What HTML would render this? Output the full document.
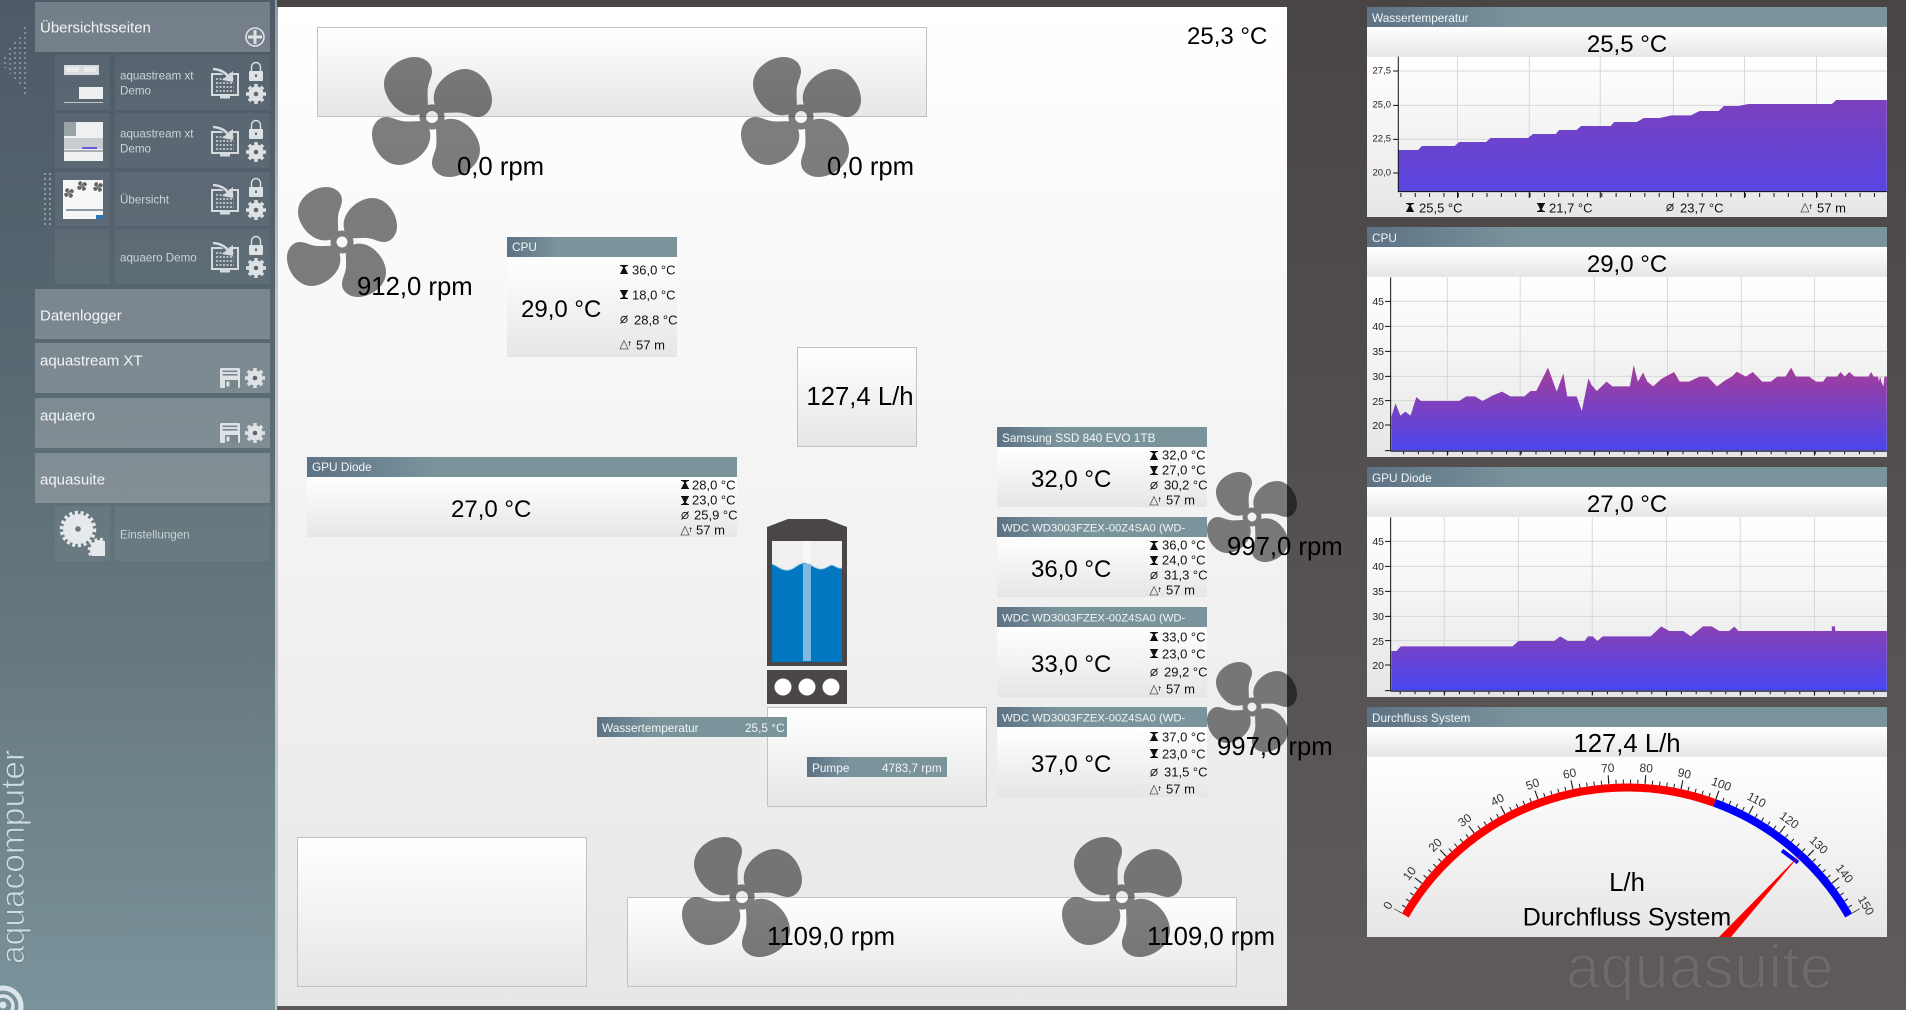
<!DOCTYPE html>
<html><head><meta charset="utf-8"><title>aquasuite</title>
<style>
html,body{margin:0;padding:0;width:1906px;height:1010px;overflow:hidden;background:#4f4b4b}
body{position:relative;font-family:"Liberation Sans",sans-serif;color:#000;background:linear-gradient(#4a4545,#5f5b5b)}
div,svg{position:absolute}
.t{position:absolute;white-space:nowrap;transform:translateY(calc(-50% + 1px));line-height:1.15}
.c{transform:translate(-50%,calc(-50% + 1px))}
.b{font-size:24px}.r{font-size:25.7px}.s{font-size:13px;color:#111}
.h{background:linear-gradient(90deg,#5d7285,#7a949c 30%,#7a949c);height:20px}
.g{background:linear-gradient(#fff,#e6e6e6)}
.bx{background:linear-gradient(#fff,#e6e6e6);border:1px solid #c2c2c2;box-sizing:border-box}
.w{color:#f2f6f7;font-size:11.8px}
.m{color:#f2f5f6;font-size:15px}
.l{color:#ccd3d7;font-size:11.6px}
.hd{background:rgba(255,255,255,.22);left:35px;width:235px}
.it{background:rgba(255,255,255,.055)}
</style></head><body>
<div style="left:0;top:0;width:275px;height:1010px;background:linear-gradient(#4e5a67,#56656f 30%,#67797f 65%,#7a939b)"></div>
<div style="left:275px;top:0;width:3px;height:1010px;background:linear-gradient(#8d9aa5,#bcc7ce 30%,#bfcad0)"></div>
<div style="left:278px;top:7px;width:1009px;height:999px;background:linear-gradient(#fff,#e7e7e7)"></div>
<div style="left:277px;top:0;width:1010px;height:7px;background:#4b4646"></div>
<div style="left:277px;top:1006px;width:1010px;height:4px;background:#5c5858"></div>

<!-- sidebar -->
<div class="hd" style="top:2px;height:50px"></div>
<div class="it" style="left:55px;top:55px;width:55px;height:55px"></div><div class="it" style="left:115px;top:55px;width:155px;height:55px"></div>
<div class="it" style="left:55px;top:113px;width:55px;height:55px"></div><div class="it" style="left:115px;top:113px;width:155px;height:55px"></div>
<div class="it" style="left:55px;top:172px;width:55px;height:54px"></div><div class="it" style="left:115px;top:172px;width:155px;height:54px"></div>
<div class="it" style="left:55px;top:229px;width:55px;height:55px"></div><div class="it" style="left:115px;top:229px;width:155px;height:55px"></div>
<div class="hd" style="top:289px;height:50px"></div>
<div class="hd" style="top:343px;height:50px"></div>
<div class="hd" style="top:398px;height:50px"></div>
<div class="hd" style="top:453px;height:50px"></div>
<div class="it" style="left:55px;top:506px;width:55px;height:55px"></div><div class="it" style="left:115px;top:506px;width:155px;height:55px"></div>

<!-- boxes -->
<div class="bx" style="left:317px;top:27px;width:610px;height:90px"></div>
<div class="bx" style="left:797px;top:347px;width:120px;height:100px"></div>
<div class="bx" style="left:767px;top:707px;width:220px;height:100px"></div>
<div class="bx" style="left:297px;top:837px;width:290px;height:150px"></div>
<div class="bx" style="left:627px;top:897px;width:610px;height:90px"></div>

<!-- widgets -->
<div class="h" style="left:507px;top:237px;width:170px"></div><div class="g" style="left:507px;top:257px;width:170px;height:100px"></div>
<div class="h" style="left:307px;top:457px;width:430px"></div><div class="g" style="left:307px;top:477px;width:430px;height:60px"></div>
<div class="h" style="left:997px;top:427px;width:210px"></div><div class="g" style="left:997px;top:447px;width:210px;height:60px"></div>
<div class="h" style="left:997px;top:517px;width:210px"></div><div class="g" style="left:997px;top:537px;width:210px;height:60px"></div>
<div class="h" style="left:997px;top:607px;width:210px"></div><div class="g" style="left:997px;top:627px;width:210px;height:70px"></div>
<div class="h" style="left:997px;top:707px;width:210px"></div><div class="g" style="left:997px;top:727px;width:210px;height:70px"></div>
<div class="h" style="left:597px;top:717px;width:190px"></div>
<div class="h" style="left:807px;top:757px;width:140px"></div>

<!-- chart panels -->
<div class="h" style="left:1367px;top:7px;width:520px"></div><div class="g" style="left:1367px;top:27px;width:520px;height:30px"></div><div class="g" style="left:1367px;top:57px;width:520px;height:160px"></div>
<div class="h" style="left:1367px;top:227px;width:520px"></div><div class="g" style="left:1367px;top:247px;width:520px;height:30px"></div><div class="g" style="left:1367px;top:277px;width:520px;height:180px"></div>
<div class="h" style="left:1367px;top:467px;width:520px"></div><div class="g" style="left:1367px;top:487px;width:520px;height:30px"></div><div class="g" style="left:1367px;top:517px;width:520px;height:180px"></div>
<div class="h" style="left:1367px;top:707px;width:520px"></div><div class="g" style="left:1367px;top:727px;width:520px;height:30px"></div><div class="g" style="left:1367px;top:757px;width:520px;height:180px"></div>

<!-- chart 1 -->
<svg style="left:1360px;top:0" width="546" height="230" viewBox="0 0 1568 690" preserveAspectRatio="none">
<defs><linearGradient id="a1" x1="0" y1="0" x2="0" y2="1"><stop offset="0" stop-color="#7c40bc"/><stop offset="1" stop-color="#5846e2"/></linearGradient>
<linearGradient id="a2" x1="0" y1="0" x2="0" y2="1"><stop offset="0" stop-color="#a83c98"/><stop offset="1" stop-color="#4c46ec"/></linearGradient>
<linearGradient id="a3" x1="0" y1="0" x2="0" y2="1"><stop offset="0" stop-color="#8a40b4"/><stop offset="1" stop-color="#4846f2"/></linearGradient></defs>
<g stroke="#d8d8d8" fill="none"><path vector-effect="non-scaling-stroke" d="M110 213H1513M110 316H1513M110 418H1513M110 519H1513M280 170V575M486 170V575M690 170V575M900 170V575M1104 170V575M1311 170V575"/></g>
<polygon fill="url(#a1)" points="110,450 167,450 178,438 272,438 285,426 362,426 375,414 482,414 497,402 562,402 572,390 622,390 635,378 720,378 730,366 795,366 815,354 860,354 895,346 950,346 975,333 1030,333 1045,318 1088,318 1115,312 1355,312 1368,300 1513,300 1513,575 110,575"/>
<g stroke="#111" fill="none"><path vector-effect="non-scaling-stroke" d="M110 170V575H1513M95 213H110M95 316H110M95 418H110M95 519H110M280 575V594M486 575V594M690 575V594M900 575V594M1104 575V594M1311 575V594"/>
<line vector-effect="non-scaling-stroke" x1="116" y1="585" x2="1513" y2="585" stroke-width="4" stroke-dasharray="1 13.35"/></g>
</svg>
<!-- chart 2 -->
<svg style="left:1360px;top:225px" width="546" height="240" viewBox="0 0 1568 720" preserveAspectRatio="none">
<g stroke="#d8d8d8" fill="none"><path vector-effect="non-scaling-stroke" d="M88 229H1513M88 304H1513M88 379H1513M88 454H1513M88 527H1513M88 600H1513M251 157V675M460 157V675M673 157V675M883 157V675M1095 157V675M1305 157V675"/></g>
<polygon fill="url(#a2)" points="90,575 102,535 116,572 130,560 145,572 162,516 175,528 285,528 305,514 330,514 352,528 380,512 408,500 432,514 472,514 490,498 506,498 540,428 565,500 584,445 595,514 622,514 637,558 656,460 665,480 680,498 708,470 725,484 775,484 786,420 798,470 813,443 825,470 842,484 865,462 902,441 918,470 945,470 975,455 998,455 1025,484 1050,465 1068,455 1082,440 1108,455 1128,441 1155,470 1180,470 1198,455 1222,455 1238,428 1252,455 1290,455 1310,470 1330,470 1340,455 1370,455 1380,441 1392,455 1405,441 1420,455 1460,455 1468,441 1475,455 1488,455 1490,470 1494,455 1497,470 1503,485 1506,455 1513,455 1513,675 90,675"/>
<g stroke="#111" fill="none"><path vector-effect="non-scaling-stroke" d="M88 157V677M72 229H88M72 304H88M72 379H88M72 454H88M72 527H88M72 600H88M72 677H88M251 678V692M460 678V692M673 678V692M883 678V692M1095 678V692M1305 678V692"/>
<line vector-effect="non-scaling-stroke" x1="88" y1="678" x2="1513" y2="678" stroke="#1a1a50" stroke-width="1.5"/>
<line vector-effect="non-scaling-stroke" x1="124" y1="684" x2="1513" y2="684" stroke-width="2.5" stroke-dasharray="1 13.7"/></g>
</svg>
<!-- chart 3 -->
<svg style="left:1360px;top:465px" width="546" height="240" viewBox="0 0 1568 720" preserveAspectRatio="none">
<g stroke="#d8d8d8" fill="none"><path vector-effect="non-scaling-stroke" d="M88 229H1513M88 304H1513M88 379H1513M88 454H1513M88 527H1513M88 600H1513M242 157V675M455 157V675M667 157V675M880 157V675M1092 157V675M1305 157V675"/></g>
<polygon fill="url(#a3)" points="90,558 105,558 117,544 438,544 455,528 558,528 575,514 597,528 645,528 655,514 668,514 682,528 697,514 835,514 865,484 888,498 928,498 950,514 985,484 1010,484 1032,498 1060,498 1075,485 1087,498 1355,498 1355,484 1364,484 1365,498 1513,498 1513,675 90,675"/>
<g stroke="#111" fill="none"><path vector-effect="non-scaling-stroke" d="M88 157V677M72 229H88M72 304H88M72 379H88M72 454H88M72 527H88M72 600H88M72 677H88M242 678V692M455 678V692M667 678V692M880 678V692M1092 678V692M1305 678V692"/>
<line vector-effect="non-scaling-stroke" x1="88" y1="678" x2="1513" y2="678" stroke="#1a1a50" stroke-width="1.5"/>
<line vector-effect="non-scaling-stroke" x1="114" y1="684" x2="1513" y2="684" stroke-width="2.5" stroke-dasharray="1 13.8"/></g>
</svg>

<!-- main graphics -->
<svg style="left:0;top:0" width="1906" height="1010" viewBox="0 0 1906 1010">
<defs>
<symbol id="fan" viewBox="-60 -60 120 120" overflow="visible">
<g id="bl"><path id="b1" d="M-4,-8 C-4,-15 -5,-25 -4,-30 C-3,-36 0,-40 0,-46 C0,-54 -8,-60 -17,-60 C-32,-60 -48,-48 -48,-33 C-48,-20 -36,-4 -22,-2 C-16,-1 -12,-3 -8,-4 Z"/>
<use href="#b1" transform="rotate(90)"/><use href="#b1" transform="rotate(180)"/><use href="#b1" transform="rotate(270)"/></g>
<circle r="9.300" fill="none" stroke="#000" stroke-width="6.600"/>
</symbol>
<symbol id="mon" overflow="visible">
<rect x="1" y="7" width="26" height="21" fill="none" stroke="#d5dadd" stroke-width="2"/>
<path d="M5 12H23M5 16H23M5 20H23M5 24H23" stroke="#d5dadd" stroke-width="1.600" stroke-dasharray="2 1.500" fill="none"/>
<rect x="9" y="29" width="10" height="2.500" fill="#d5dadd"/>
<path d="M2 1.500C9 2 13 4 17 9" stroke="#58646f" stroke-width="5" fill="none"/>
<path d="M2 2C9 2.500 13 4.500 17 9" stroke="#d5dadd" stroke-width="2.600" fill="none"/>
<polygon points="11,13 22,15 22,4" fill="#d5dadd"/>
</symbol>
<symbol id="lock" overflow="visible">
<rect x="0" y="10" width="14" height="10" rx="1" fill="#dde2e5"/>
<path d="M2.500 10V6a4.500 4.500 0 0 1 9 0V10" stroke="#dde2e5" stroke-width="1.400" fill="none"/>
<rect x="6" y="13.500" width="2" height="2.500" fill="#56626e"/>
</symbol>
<symbol id="gear" overflow="visible">
<circle r="7.600" fill="#dde2e5"/>
<circle r="8.700" fill="none" stroke="#dde2e5" stroke-width="2.600" pathLength="8" stroke-dasharray=".52 .48" stroke-dashoffset=".26"/>
<circle r="2.300" fill="#5a6772"/>
</symbol>
<symbol id="flop" overflow="visible">
<rect width="20" height="20" rx="1.500" fill="#dde2e5"/>
<rect x="2.500" y="2.500" width="15" height="1.600" fill="#7a878f"/><rect x="2.500" y="6" width="15" height="1.600" fill="#7a878f"/>
<rect x="5" y="12" width="13" height="8" fill="#77858d"/><rect x="6.500" y="13.500" width="3" height="5" fill="#dde2e5"/>
</symbol>
<symbol id="mx" overflow="visible"><path d="M0 .5H8M0 8.500H8" stroke="#111" fill="none"/><polygon points="4,1 7.500,8 .5,8" fill="#111"/><polygon points="1,1 7,1 4,3" fill="#111"/></symbol>
<symbol id="mn" overflow="visible"><path d="M0 .5H8M0 8.500H8" stroke="#111" fill="none"/><polygon points=".5,1 7.500,1 4,8" fill="#111"/><polygon points="4,6 7,8 1,8" fill="#111"/></symbol>
<symbol id="av" overflow="visible"><circle cx="4" cy="4.500" r="3.100" fill="none" stroke="#222"/><path d="M.5 8.500L7.500 .5" stroke="#222"/></symbol>
<symbol id="dt" overflow="visible"><polygon points="4,.5 8,9 0,9" fill="none" stroke="#555" stroke-width=".8"/><path d="M9.500 1V6M8.500 2.500H10.800" stroke="#333" stroke-width=".7" fill="none"/></symbol>
<clipPath id="gc"><rect x="1367" y="757" width="520" height="180"/></clipPath>
<clipPath id="bg"><rect x="55" y="506" width="50" height="50"/></clipPath>
</defs>

<!-- dots -->
<g stroke="#7f8e9a" stroke-width="2" stroke-dasharray="2 3" fill="none">
<path d="M25 27V97M20 37V87M15 42V82M10 48V74M5 57V68"/>
</g>
<g stroke="#8b9aa4" stroke-width="2" stroke-dasharray="2 3" fill="none"><path d="M45 173V227M50 173V227"/></g>

<!-- plus -->
<circle cx="255" cy="37" r="9" fill="none" stroke="#dde2e5" stroke-width="1.600"/>
<path d="M255 30V44M248 37H262" stroke="#dde2e5" stroke-width="3"/>

<!-- thumbs -->
<rect x="64" y="65" width="35" height="10" fill="#d8dcdf"/><rect x="66" y="67" width="13" height="5" fill="#e8eaeb"/><rect x="84" y="67" width="12" height="5" fill="#e8eaeb"/>
<rect x="79" y="87" width="24" height="12" fill="#eceeef"/><rect x="64" y="102" width="39" height="1" fill="#c0c6ca"/>
<rect x="64" y="122" width="39" height="39" fill="#eef0f1"/><rect x="64" y="122" width="12" height="14" fill="#99a3a8"/><rect x="64" y="138" width="39" height="11" fill="#c7ccd0"/><rect x="82" y="147" width="15" height="2" fill="#6a58d8"/><rect x="64" y="150" width="39" height="2" fill="#a8afb4"/>
<rect x="63" y="180" width="40" height="39" fill="#f6f6f6"/>
<g opacity=".6"><use href="#fan" x="-60" y="-60" width="120" height="120" transform="translate(82 186) scale(.08)"/><use href="#fan" x="-60" y="-60" width="120" height="120" transform="translate(98 187) scale(.08)"/><use href="#fan" x="-60" y="-60" width="120" height="120" transform="translate(69 193) scale(.08)"/></g>
<rect x="66" y="209" width="37" height="2" fill="#8a9aa2"/><rect x="96" y="215" width="7" height="4" fill="#2a78b8"/>

<use href="#mon" x="211" y="67"/><use href="#lock" x="249" y="61"/><use href="#gear" x="256" y="94"/>
<use href="#mon" x="211" y="125"/><use href="#lock" x="249" y="119"/><use href="#gear" x="256" y="152"/>
<use href="#mon" x="211" y="183"/><use href="#lock" x="249" y="177"/><use href="#gear" x="256" y="210"/>
<use href="#mon" x="211" y="241"/><use href="#lock" x="249" y="235"/><use href="#gear" x="256" y="268"/>
<use href="#flop" x="220" y="368"/><use href="#gear" x="255" y="378"/>
<use href="#flop" x="220" y="423"/><use href="#gear" x="255" y="433"/>

<!-- settings gear -->
<g clip-path="url(#bg)">
<circle cx="78" cy="529" r="15" fill="#e6e9eb"/><circle cx="78" cy="529" r="16.500" fill="none" stroke="#e6e9eb" stroke-width="3.500" pathLength="18" stroke-dasharray=".55 .45"/><circle cx="78" cy="529" r="2.800" fill="#687a84"/>
<circle cx="100" cy="550" r="10" fill="#e6e9eb"/><circle cx="100" cy="550" r="11" fill="none" stroke="#e6e9eb" stroke-width="2.500" pathLength="12" stroke-dasharray=".5 .5"/>
</g>

<!-- logo -->
<g fill="none" stroke="#dbe6ea">
<circle cx="3" cy="1006" r="18" stroke-width="5"/><circle cx="3" cy="1006" r="10" stroke-width="3.500"/></g>
<circle cx="3" cy="1005" r="3.500" fill="#dbe6ea"/>

<!-- fans -->
<g opacity=".5"><use href="#fan" x="-60" y="-60" width="120" height="120" transform="translate(432 117)"/></g>
<g opacity=".5"><use href="#fan" x="-60" y="-60" width="120" height="120" transform="translate(801 117)"/></g>
<g opacity=".5"><use href="#fan" x="-60" y="-60" width="120" height="120" transform="translate(342 242) scale(.917)"/></g>
<g opacity=".5"><use href="#fan" x="-60" y="-60" width="120" height="120" transform="translate(1252 517) scale(.75)"/></g>
<g opacity=".5"><use href="#fan" x="-60" y="-60" width="120" height="120" transform="translate(1252 707) scale(.75)"/></g>
<g opacity=".5"><use href="#fan" x="-60" y="-60" width="120" height="120" transform="translate(742 897)"/></g>
<g opacity=".5"><use href="#fan" x="-60" y="-60" width="120" height="120" transform="translate(1122 897)"/></g>

<!-- reservoir -->
<polygon points="767,527 788,519 826,519 847,527 847,666 767,666" fill="#4b4646"/>
<rect x="772" y="541" width="70" height="121" fill="#f0f0f0"/>
<rect x="803" y="541" width="8" height="24" fill="#f7f7f7"/>
<path d="M772 564C778 566 782 571 788 570C794 570 798 563 804 563C810 563 815 569 821 569C826 569 829 565 832 565C836 566 838 569 842 568V662H772Z" fill="#0077c0"/>
<path d="M772 564C778 566 782 571 788 570C794 570 798 563 804 563C810 563 815 569 821 569C826 569 829 565 832 565C836 566 838 569 842 568" fill="none" stroke="#a6cfe8" stroke-width="1"/>
<rect x="803" y="564" width="8" height="97" fill="#7fb8e0"/>
<rect x="767" y="670" width="80" height="34" fill="#4b4646"/>
<circle cx="783" cy="687" r="8.500" fill="#fff"/><circle cx="807" cy="687" r="8.500" fill="#fff"/><circle cx="831" cy="687" r="8.500" fill="#fff"/>

<!-- stat icons -->
<use href="#mx" x="620" y="265"/><use href="#mn" x="620" y="290"/><use href="#av" x="620" y="315"/><use href="#dt" x="620" y="340"/>
<use href="#mx" x="681" y="480"/><use href="#mn" x="681" y="496"/><use href="#av" x="681" y="511"/><use href="#dt" x="681" y="526"/>
<use href="#mx" x="1150" y="451"/><use href="#mn" x="1150" y="466"/><use href="#av" x="1150" y="481"/><use href="#dt" x="1150" y="496"/>
<use href="#mx" x="1150" y="541"/><use href="#mn" x="1150" y="556"/><use href="#av" x="1150" y="571"/><use href="#dt" x="1150" y="586"/>
<use href="#mx" x="1150" y="632"/><use href="#mn" x="1150" y="649"/><use href="#av" x="1150" y="668"/><use href="#dt" x="1150" y="685"/>
<use href="#mx" x="1150" y="732"/><use href="#mn" x="1150" y="749"/><use href="#av" x="1150" y="768"/><use href="#dt" x="1150" y="785"/>
<use href="#mx" x="1406" y="203"/><use href="#mn" x="1537" y="203"/><use href="#av" x="1666" y="203"/><use href="#dt" x="1801" y="203"/>

<!-- gauge -->
<g clip-path="url(#gc)">
<path d="M1405.300 915.500A256 256 0 0 1 1714.600 802.900" fill="none" stroke="#f00" stroke-width="8"/>
<path d="M1714.600 802.900A256 256 0 0 1 1848.700 915.500" fill="none" stroke="#00f" stroke-width="8"/>
<path d="M1400.100 912.500A262 262 0 0 1 1853.900 912.500" fill="none" stroke="#222" stroke-width="4" pathLength="75" stroke-dasharray=".14 .86" stroke-dashoffset=".07"/>
<path d="M1397.500 911A265 265 0 0 1 1856.500 911" fill="none" stroke="#222" stroke-width="8" pathLength="15" stroke-dasharray=".03 .97" stroke-dashoffset=".015"/>
<g font-family="'Liberation Sans',sans-serif" font-size="12" fill="#333" text-anchor="middle" dominant-baseline="central">
<text x="1627" y="767.500" transform="rotate(-60 1627 1043.500)">0</text>
<text x="1627" y="767.500" transform="rotate(-52 1627 1043.500)">10</text>
<text x="1627" y="767.500" transform="rotate(-44 1627 1043.500)">20</text>
<text x="1627" y="767.500" transform="rotate(-36 1627 1043.500)">30</text>
<text x="1627" y="767.500" transform="rotate(-28 1627 1043.500)">40</text>
<text x="1627" y="767.500" transform="rotate(-20 1627 1043.500)">50</text>
<text x="1627" y="767.500" transform="rotate(-12 1627 1043.500)">60</text>
<text x="1627" y="767.500" transform="rotate(-4 1627 1043.500)">70</text>
<text x="1627" y="767.500" transform="rotate(4 1627 1043.500)">80</text>
<text x="1627" y="767.500" transform="rotate(12 1627 1043.500)">90</text>
<text x="1627" y="767.500" transform="rotate(20 1627 1043.500)">100</text>
<text x="1627" y="767.500" transform="rotate(28 1627 1043.500)">110</text>
<text x="1627" y="767.500" transform="rotate(36 1627 1043.500)">120</text>
<text x="1627" y="767.500" transform="rotate(44 1627 1043.500)">130</text>
<text x="1627" y="767.500" transform="rotate(52 1627 1043.500)">140</text>
<text x="1627" y="767.500" transform="rotate(60 1627 1043.500)">150</text>
</g>
<path d="M1782 850.500L1798 862.500" stroke="#00f" stroke-width="4"/>
<polygon points="1801.500,853 1719,937 1731,937" fill="#f00"/>
</g>
</svg>

<!-- sidebar text -->
<span class="t m" style="left:40px;top:27px">Übersichtsseiten</span>
<span class="t l" style="left:120px;top:75px">aquastream xt</span><span class="t l" style="left:120px;top:90px">Demo</span>
<span class="t l" style="left:120px;top:133px">aquastream xt</span><span class="t l" style="left:120px;top:148px">Demo</span>
<span class="t l" style="left:120px;top:199px">Übersicht</span>
<span class="t l" style="left:120px;top:257px">aquaero Demo</span>
<span class="t m" style="left:40px;top:315px">Datenlogger</span>
<span class="t m" style="left:40px;top:360px">aquastream XT</span>
<span class="t m" style="left:40px;top:415px">aquaero</span>
<span class="t m" style="left:40px;top:479px">aquasuite</span>
<span class="t l" style="left:120px;top:534px">Einstellungen</span>
<span style="position:absolute;left:-101px;top:832px;width:230px;text-align:left;transform:rotate(-90deg);transform-origin:center;font-size:33.500px;line-height:34px;color:#cfdce1;white-space:nowrap;-webkit-text-stroke:.8px #6a8089">aquacomputer</span>

<!-- main text -->
<span class="t b" style="left:1187px;top:36px">25,3 °C</span>
<span class="t r" style="left:457px;top:167px">0,0 rpm</span>
<span class="t r" style="left:827px;top:167px">0,0 rpm</span>
<span class="t r" style="left:357px;top:287px">912,0 rpm</span>
<span class="t r" style="left:1227px;top:547px">997,0 rpm</span>
<span class="t r" style="left:1217px;top:747px">997,0 rpm</span>
<span class="t r" style="left:767px;top:937px">1109,0 rpm</span>
<span class="t r" style="left:1147px;top:937px">1109,0 rpm</span>
<span class="t r c" style="left:860px;top:397px">127,4 L/h</span>

<span class="t w" style="left:512px;top:247px">CPU</span>
<span class="t b" style="left:521px;top:309px">29,0 °C</span>
<span class="t s" style="left:632px;top:270px">36,0 °C</span><span class="t s" style="left:632px;top:295px">18,0 °C</span><span class="t s" style="left:634px;top:320px">28,8 °C</span><span class="t s" style="left:636px;top:345px">57 m</span>

<span class="t w" style="left:312px;top:467px">GPU Diode</span>
<span class="t b" style="left:451px;top:509px">27,0 °C</span>
<span class="t s" style="left:692px;top:485px">28,0 °C</span><span class="t s" style="left:692px;top:500px">23,0 °C</span><span class="t s" style="left:694px;top:515px">25,9 °C</span><span class="t s" style="left:696px;top:530px">57 m</span>

<span class="t w" style="left:1002px;top:438px">Samsung SSD 840 EVO 1TB</span>
<span class="t b" style="left:1031px;top:479px">32,0 °C</span>
<span class="t s" style="left:1162px;top:455px">32,0 °C</span><span class="t s" style="left:1162px;top:470px">27,0 °C</span><span class="t s" style="left:1164px;top:485px">30,2 °C</span><span class="t s" style="left:1166px;top:500px">57 m</span>

<span class="t w" style="left:1002px;top:528px;font-size:11.300px">WDC WD3003FZEX-00Z4SA0 (WD-</span>
<span class="t b" style="left:1031px;top:569px">36,0 °C</span>
<span class="t s" style="left:1162px;top:545px">36,0 °C</span><span class="t s" style="left:1162px;top:560px">24,0 °C</span><span class="t s" style="left:1164px;top:575px">31,3 °C</span><span class="t s" style="left:1166px;top:590px">57 m</span>

<span class="t w" style="left:1002px;top:618px;font-size:11.300px">WDC WD3003FZEX-00Z4SA0 (WD-</span>
<span class="t b" style="left:1031px;top:664px">33,0 °C</span>
<span class="t s" style="left:1162px;top:637px">33,0 °C</span><span class="t s" style="left:1162px;top:654px">23,0 °C</span><span class="t s" style="left:1164px;top:672px">29,2 °C</span><span class="t s" style="left:1166px;top:689px">57 m</span>

<span class="t w" style="left:1002px;top:718px;font-size:11.300px">WDC WD3003FZEX-00Z4SA0 (WD-</span>
<span class="t b" style="left:1031px;top:764px">37,0 °C</span>
<span class="t s" style="left:1162px;top:737px">37,0 °C</span><span class="t s" style="left:1162px;top:754px">23,0 °C</span><span class="t s" style="left:1164px;top:772px">31,5 °C</span><span class="t s" style="left:1166px;top:789px">57 m</span>

<span class="t w" style="left:602px;top:728px">Wassertemperatur</span><span class="t w" style="left:745px;top:728px">25,5 °C</span>
<span class="t w" style="left:812px;top:768px">Pumpe</span><span class="t w" style="left:882px;top:768px">4783,7 rpm</span>

<!-- chart text -->
<span class="t w" style="left:1372px;top:18px">Wassertemperatur</span>
<span class="t b c" style="left:1627px;top:44px">25,5 °C</span>
<span class="t" style="right:515px;top:71px;font-size:9.500px;color:#222">27,5</span>
<span class="t" style="right:515px;top:105px;font-size:9.500px;color:#222">25,0</span>
<span class="t" style="right:515px;top:139px;font-size:9.500px;color:#222">22,5</span>
<span class="t" style="right:515px;top:173px;font-size:9.500px;color:#222">20,0</span>
<span class="t s" style="left:1419px;top:208px">25,5 °C</span><span class="t s" style="left:1549px;top:208px">21,7 °C</span><span class="t s" style="left:1680px;top:208px">23,7 °C</span><span class="t s" style="left:1817px;top:208px">57 m</span>

<span class="t w" style="left:1372px;top:238px">CPU</span>
<span class="t b c" style="left:1627px;top:264px">29,0 °C</span>
<span class="t" style="right:522px;top:301px;font-size:10.500px;color:#222">45</span><span class="t" style="right:522px;top:326px;font-size:10.500px;color:#222">40</span><span class="t" style="right:522px;top:351px;font-size:10.500px;color:#222">35</span><span class="t" style="right:522px;top:376px;font-size:10.500px;color:#222">30</span><span class="t" style="right:522px;top:401px;font-size:10.500px;color:#222">25</span><span class="t" style="right:522px;top:425px;font-size:10.500px;color:#222">20</span>

<span class="t w" style="left:1372px;top:478px">GPU Diode</span>
<span class="t b c" style="left:1627px;top:504px">27,0 °C</span>
<span class="t" style="right:522px;top:541px;font-size:10.500px;color:#222">45</span><span class="t" style="right:522px;top:566px;font-size:10.500px;color:#222">40</span><span class="t" style="right:522px;top:591px;font-size:10.500px;color:#222">35</span><span class="t" style="right:522px;top:616px;font-size:10.500px;color:#222">30</span><span class="t" style="right:522px;top:641px;font-size:10.500px;color:#222">25</span><span class="t" style="right:522px;top:665px;font-size:10.500px;color:#222">20</span>

<span class="t w" style="left:1372px;top:718px">Durchfluss System</span>
<span class="t r c" style="left:1627px;top:744px">127,4 L/h</span>
<span class="t r c" style="left:1627px;top:883px">L/h</span>
<span class="t c" style="left:1627px;top:917px;font-size:25px">Durchfluss System</span>

<span class="t" style="left:1566px;top:966px;font-size:61px;letter-spacing:.4px;color:#6e6a6a;-webkit-text-stroke:1.200px #5b5757">aquasuite</span>
</body></html>
